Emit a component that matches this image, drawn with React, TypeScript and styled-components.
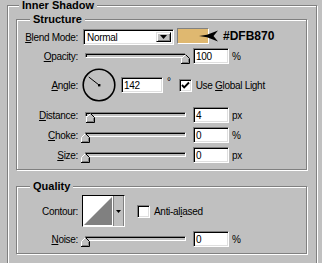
import React from 'react';
import styled, { createGlobalStyle } from 'styled-components';

const Global = createGlobalStyle`
  html, body { margin: 0; padding: 0; background: #c0c0c0; }
  body {
    width: 322px; height: 263px; overflow: hidden;
    font-family: "Liberation Sans", Arial, sans-serif;
    font-size: 10px; letter-spacing: -0.3px; color: #000;
  }
`;

const Frame = styled.div`
  padding-left: 7px;
`;

const Group = styled.fieldset<{ $w: number }>`
  margin: 0;
  padding: 0;
  min-width: 0;
  width: ${p => p.$w}px;
  box-sizing: border-box;
  border: 1px solid #808080;
  box-shadow: inset 1px 1px 0 #fff, 1px 1px 0 #fff;
  & + & { margin-top: 11px; }
`;

const Legend = styled.legend<{ $ml: number }>`
  margin-left: ${p => p.$ml}px;
  padding: 0 3px;
  font: bold 11px/11px "Liberation Sans", Arial, sans-serif;
  letter-spacing: 0;
  background: #c0c0c0;
`;

const OuterBody = styled.div`
  padding: 3px 9px 30px 8px;
`;

const GroupBody = styled.div`
  padding-bottom: 6px;
`;

const Row = styled.div<{ $mt: number; $h?: number }>`
  display: flex;
  align-items: center;
  height: ${p => p.$h ?? 16}px;
  margin-top: ${p => p.$mt}px;
`;

const Label = styled.div`
  width: 61px;
  flex: none;
  margin-right: 4px;
  text-align: right;
  white-space: nowrap;
`;

const sunken = `
  box-sizing: border-box;
  border: 1px solid;
  border-color: #808080 #fff #fff #808080;
  box-shadow: inset 1px 1px 0 #000, inset -1px -1px 0 #dfdfdf;
`;

const Select = styled.div`
  ${sunken}
  margin-left: 1px;
  width: 91px;
  height: 16px;
  background: #fff;
  display: flex;
  align-items: stretch;
  padding: 2px;
`;

const SelectText = styled.div`
  flex: 1;
  line-height: 12px;
  padding-left: 1px;
`;

const DropButton = styled.div`
  width: 15px;
  box-sizing: border-box;
  background: #c0c0c0;
  border: 1px solid;
  border-color: #dfdfdf #000 #000 #dfdfdf;
  box-shadow: inset 1px 1px 0 #fff, inset -1px -1px 0 #808080;
  display: flex;
  align-items: center;
  justify-content: center;
`;

const DownTri = () => (
  <svg width="7" height="4" viewBox="0 0 7 4"><polygon points="0,0 7,0 3.5,4" fill="#000" /></svg>
);

const Swatch = styled.div`
  margin-left: 3px;
  width: 32px;
  height: 16px;
  margin-top: -2px;
  box-sizing: border-box;
  background: #dfb870;
  border: 1px solid;
  border-color: #808080 #fff #fff #808080;
`;

const ArrowMark = styled.svg`
  margin-left: -10px;
  flex: none;
  margin-top: -2px;
`;

const Hex = styled.div`
  margin-left: 4px;
  margin-top: -2px;
  font: bold 12px "Liberation Sans", Arial, sans-serif;
  letter-spacing: 0;
`;

const SliderBox = styled.div`
  position: relative;
  margin-left: -1px;
  width: 109px;
  height: 16px;
  flex: none;
`;

const Track = styled.div`
  margin: 5px 4px 0;
  height: 5px;
  box-sizing: border-box;
  background: #c0c0c0;
  border: 1px solid;
  border-color: #808080 #fff #fff #808080;
  box-shadow: inset 1px 1px 0 #000;
`;

const Thumb = styled.svg<{ $pos: number }>`
  position: absolute;
  bottom: 0;
  left: ${p => p.$pos}px;
`;

const Slider = ({ pos }: { pos: number }) => (
  <SliderBox>
    <Track />
    <Thumb $pos={pos} width="9" height="10" viewBox="0 0 9 10">
      <polygon points="4.5,0.5 8.5,4.5 8.5,9.5 0.5,9.5 0.5,4.5" fill="#c0c0c0" />
      <polyline points="0.5,9 0.5,4.5 4.5,0.5" stroke="#fff" fill="none" />
      <polyline points="4.5,0.5 8.5,4.5 8.5,9.5 0,9.5" stroke="#000" fill="none" />
      <polyline points="7.5,5 7.5,8.5 1,8.5" stroke="#808080" fill="none" />
    </Thumb>
  </SliderBox>
);

const Field = styled.div<{ $w?: number; $ml?: number }>`
  ${sunken}
  width: ${p => p.$w ?? 36}px;
  height: 16px;
  margin-left: ${p => p.$ml ?? 3}px;
  background: #fff;
  padding: 2px 0 0 2px;
  line-height: 12px;
  flex: none;
`;

const Unit = styled.div<{ $ml?: number }>`
  margin-left: ${p => p.$ml ?? 3}px;
`;

const Degree = styled.div`
  margin-left: 4px;
  align-self: flex-start;
  margin-top: 8px;
`;

const CheckBox = styled.div<{ $ml: number }>`
  ${sunken}
  width: 13px;
  height: 13px;
  margin-left: ${p => p.$ml}px;
  background: #fff;
  display: flex;
  align-items: center;
  justify-content: center;
  flex: none;
`;

const CheckText = styled.div`
  margin-left: 4px;
  white-space: nowrap;
`;

const Dial = styled.svg`
  flex: none;
`;

const ContourBox = styled.div`
  width: 43px;
  height: 32px;
  box-sizing: border-box;
  border: 1px solid;
  border-color: #000 #fff #fff #000;
  display: flex;
  flex: none;
`;

const ContourPreview = styled.svg`
  flex: none;
  display: block;
`;

const ContourDrop = styled.div`
  flex: 1;
  background: #c0c0c0;
  border-left: 1px solid #808080;
  border-right: 1px solid #808080;
  display: flex;
  align-items: center;
  justify-content: center;
`;

const SmallTri = () => (
  <svg width="5" height="3" viewBox="0 0 5 3"><polygon points="0,0 5,0 2.5,3" fill="#000" /></svg>
);

const CheckMark = () => (
  <svg width="9" height="9" viewBox="0 0 9 9">
    <path d="M1 4 L3.2 6.3 L8 1.5" stroke="#000" strokeWidth="1.9" fill="none" />
  </svg>
);

export default function App() {
  const angle = (142 * Math.PI) / 180;
  const cx = 17, cy = 17;
  const ex = cx + Math.cos(angle) * 13;
  const ey = cy - Math.sin(angle) * 13;
  return (
    <>
      <Global />
      <Frame>
        <Group $w={310}>
          <Legend $ml={11}>Inner Shadow</Legend>
          <OuterBody>
            <Group $w={291}>
              <Legend $ml={13}>Structure</Legend>
              <GroupBody>
                <Row $mt={4}>
                  <Label><u>B</u>lend Mode:</Label>
                  <Select>
                    <SelectText>Normal</SelectText>
                    <DropButton><DownTri /></DropButton>
                  </Select>
                  <Swatch />
                  <ArrowMark width="20" height="12" viewBox="0 0 20 12">
                    <polygon points="0,6 8,4.8 19,0.5 14.5,6 19,11.5 8,7.2" fill="#000" />
                  </ArrowMark>
                  <Hex>#DFB870</Hex>
                </Row>
                <Row $mt={3}>
                  <Label><u>O</u>pacity:</Label>
                  <Slider pos={100} />
                  <Field>100</Field>
                  <Unit>%</Unit>
                </Row>
                <Row $mt={4} $h={34}>
                  <Label><u>A</u>ngle:</Label>
                  <Dial width="34" height="34" viewBox="0 0 34 34">
                    <circle cx={cx} cy={cy} r="15.8" stroke="#000" strokeWidth="1.6" fill="none" />
                    <line x1={cx} y1={cy} x2={ex} y2={ey} stroke="#000" strokeWidth="1" />
                    <rect x={cx - 1} y={cy - 1} width="2.4" height="2.4" fill="#000" />
                  </Dial>
                  <Field $w={42} $ml={5}>142</Field>
                  <Degree>°</Degree>
                  <CheckBox $ml={8}><CheckMark /></CheckBox>
                  <CheckText>Use <u>G</u>lobal Light</CheckText>
                </Row>
                <Row $mt={5}>
                  <Label><u>D</u>istance:</Label>
                  <Slider pos={5} />
                  <Field>4</Field>
                  <Unit>px</Unit>
                </Row>
                <Row $mt={4}>
                  <Label><u>C</u>hoke:</Label>
                  <Slider pos={0} />
                  <Field>0</Field>
                  <Unit>%</Unit>
                </Row>
                <Row $mt={4}>
                  <Label><u>S</u>ize:</Label>
                  <Slider pos={0} />
                  <Field>0</Field>
                  <Unit>px</Unit>
                </Row>
              </GroupBody>
            </Group>
            <Group $w={291}>
              <Legend $ml={13}>Quality</Legend>
              <GroupBody>
                <Row $mt={3} $h={32}>
                  <Label>Contour:</Label>
                  <ContourBox>
                    <ContourPreview width="30" height="30" viewBox="0 0 30 30">
                      <rect x="0" y="0" width="30" height="30" fill="#fff" />
                      <polygon points="1,29 29,1 29,29" fill="#808080" />
                    </ContourPreview>
                    <ContourDrop><SmallTri /></ContourDrop>
                  </ContourBox>
                  <CheckBox $ml={12} />
                  <CheckText>Anti-al<u>i</u>ased</CheckText>
                </Row>
                <Row $mt={4}>
                  <Label><u>N</u>oise:</Label>
                  <Slider pos={0} />
                  <Field>0</Field>
                  <Unit>%</Unit>
                </Row>
              </GroupBody>
            </Group>
          </OuterBody>
        </Group>
      </Frame>
    </>
  );
}
